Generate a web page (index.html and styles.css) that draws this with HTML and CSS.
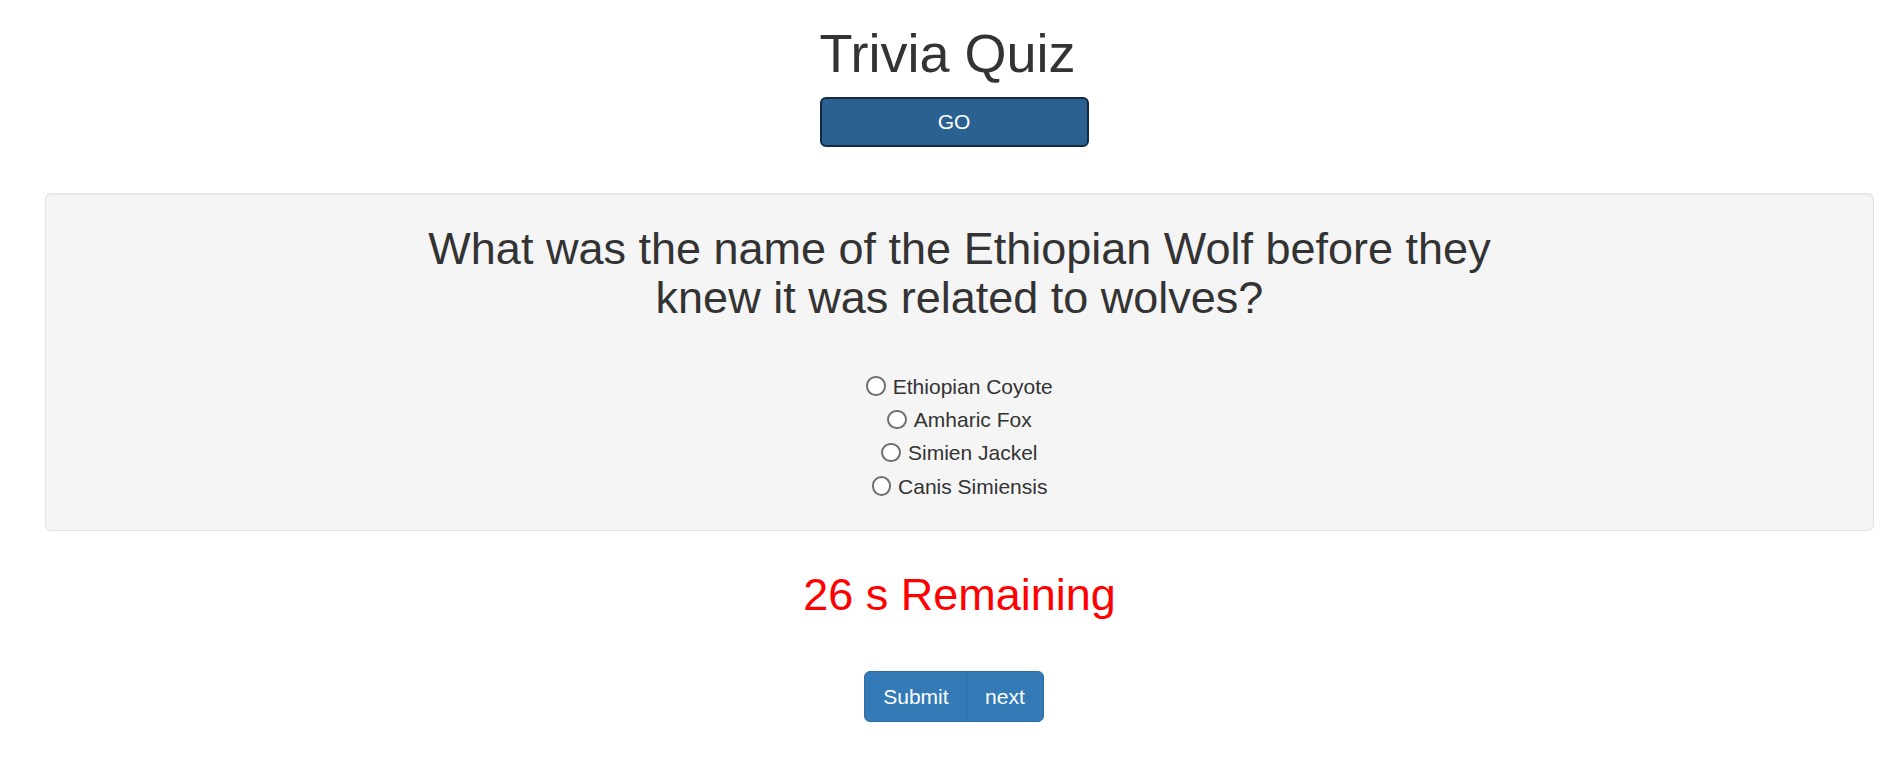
FILE: index.html
```html
<!DOCTYPE html>
<html lang="en">
<head>
<meta charset="utf-8">
<title>Trivia Quiz</title>
<link rel="stylesheet" href="styles.css">
</head>
<body>
  <header class="header-row">
    <div class="header">
      <h1 class="title">Trivia Quiz</h1>
      <button class="btn btn-go" type="button">GO</button>
    </div>
  </header>

  <main class="main-row">
    <section class="well">
      <h2 class="question">What was the name of the Ethiopian Wolf before they knew it was related to wolves?</h2>
      <div class="options">
        <label class="option"><input class="radio" type="radio" name="answer">Ethiopian Coyote</label>
        <label class="option"><input class="radio" type="radio" name="answer">Amharic Fox</label>
        <label class="option"><input class="radio" type="radio" name="answer">Simien Jackel</label>
        <label class="option"><input class="radio" type="radio" name="answer">Canis Simiensis</label>
      </div>
    </section>
    <h2 class="timer">26 s Remaining</h2>
  </main>

  <footer class="footer-row">
    <div class="btn-group">
      <button class="btn btn-primary btn-first" type="button">Submit</button>
      <button class="btn btn-primary btn-last" type="button">next</button>
    </div>
  </footer>
</body>
</html>
```

FILE: styles.css
```css
* {
  box-sizing: border-box;
}

html, body {
  margin: 0;
  padding: 0;
  background: #ffffff;
}

body {
  font-family: "Liberation Sans", Arial, Helvetica, sans-serif;
  font-size: 21px;
  color: #333333;
}

.header-row {
  padding-left: 5px;
  padding-top: 23.6px;
}

.header {
  width: 269px;
  margin: 0 auto;
  display: flex;
  flex-direction: column;
  align-items: flex-start;
}

.title {
  margin: 0 0 14px 0;
  font-size: 54px;
  font-weight: 500;
  line-height: 1.1;
  color: #333333;
  white-space: nowrap;
}

.btn {
  font-family: "Liberation Sans", Arial, Helvetica, sans-serif;
  font-size: 21px;
  line-height: 30px;
  padding: 9px 18px;
  border: 1.5px solid transparent;
  border-radius: 6px;
  color: #ffffff;
  cursor: pointer;
  display: inline-block;
  text-align: center;
}

.btn-go {
  width: 269px;
  height: 50px;
  padding-top: 8px;
  padding-bottom: 8px;
  background: #2a6190;
  border: 2px solid #122b40;
}

.main-row {
  padding-left: 45px;
  padding-right: 29px;
  margin-top: 46px;
}

.well {
  background: #f5f5f5;
  border: 1.5px solid #e3e3e3;
  border-radius: 6px;
  box-shadow: inset 0 1.5px 1.5px rgba(0, 0, 0, 0.05);
  padding: 30px 28.5px 27.5px;
}

.question {
  max-width: 1134px;
  margin: 0 auto;
  font-size: 45px;
  font-weight: 500;
  line-height: 1.1;
  text-align: center;
  color: #333333;
}

.options {
  margin-top: 47px;
  display: flex;
  flex-direction: column;
  align-items: center;
}

.option {
  display: block;
  line-height: 33.2px;
  height: 33.2px;
  font-size: 21px;
  color: #333333;
  text-align: center;
  cursor: pointer;
}

.radio {
  -webkit-appearance: none;
  appearance: none;
  width: 19.5px;
  height: 19.5px;
  margin: 0 7px 0 0;
  vertical-align: -2px;
  border: 2px solid #707070;
  border-radius: 50%;
  background: #ffffff;
}

.timer {
  margin: 38.5px 0 0 0;
  font-size: 45px;
  font-weight: 500;
  line-height: 1.1;
  text-align: center;
  color: #ff0000;
}

.footer-row {
  padding-left: 5px;
  margin-top: 51.8px;
  display: flex;
  justify-content: center;
}

.btn-group {
  display: flex;
}

.btn-primary {
  background: #337ab7;
  border-color: #2e6da4;
  height: 51px;
}

.btn-first {
  border-top-right-radius: 0;
  border-bottom-right-radius: 0;
}

.btn-last {
  margin-left: -1.5px;
  border-top-left-radius: 0;
  border-bottom-left-radius: 0;
}
```
